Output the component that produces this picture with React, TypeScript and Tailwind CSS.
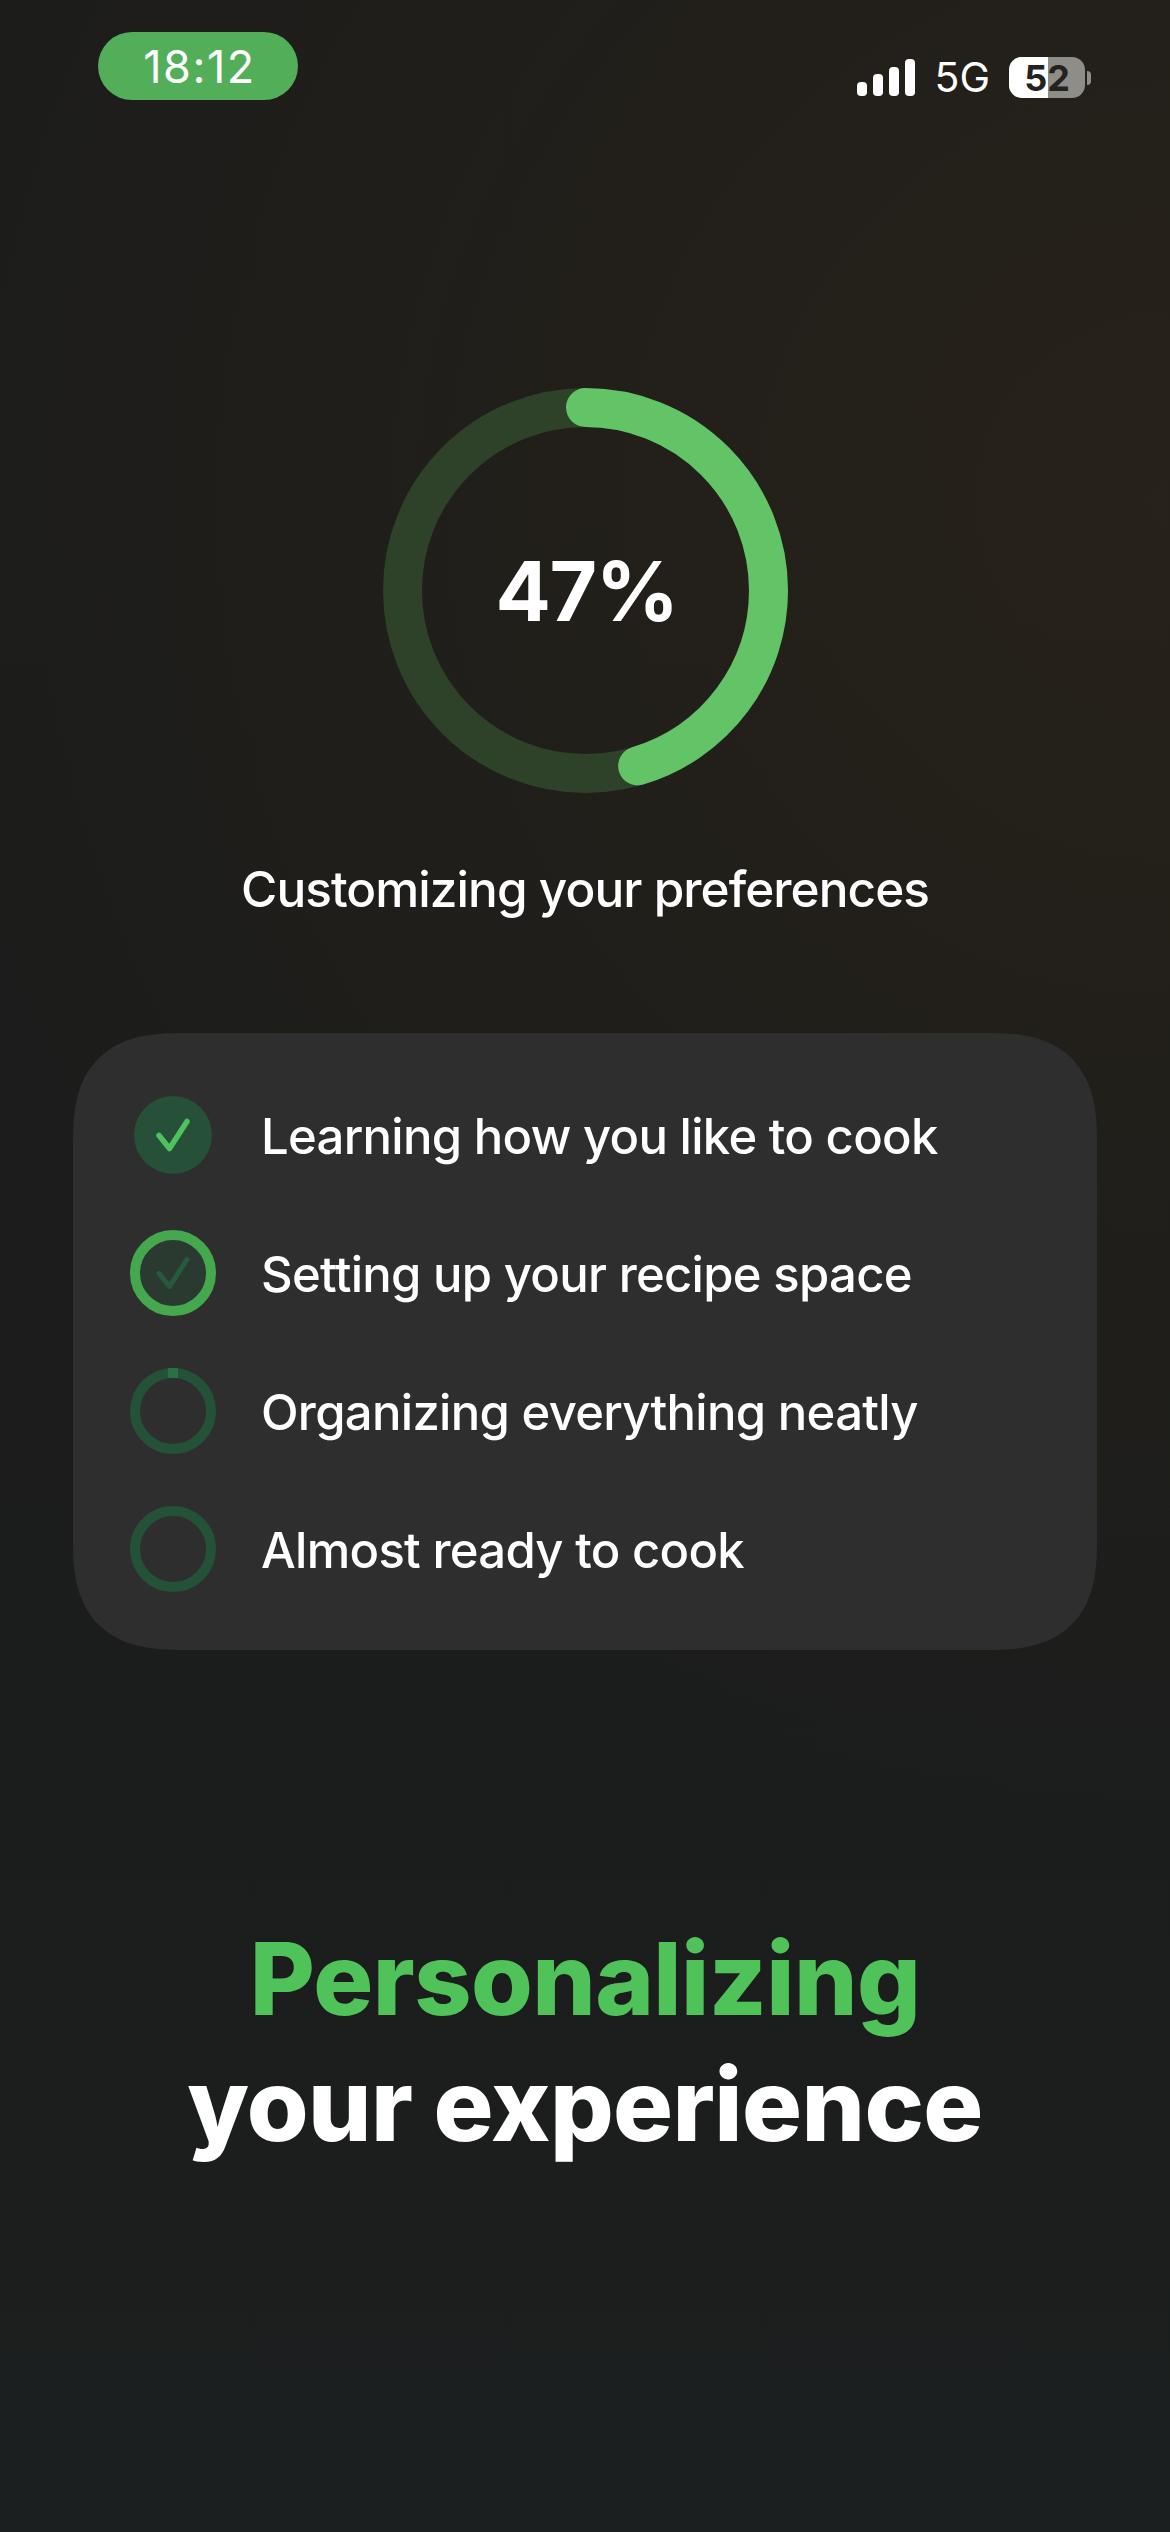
import React from "react";

function Check({ color, width = 5.5 }: { color: string; width?: number }) {
  return (
    <svg width={44} height={44} viewBox="0 0 44 44" fill="none">
      <path d="M8 22.500 L18.500 35.500 L36 8.500" stroke={color} strokeWidth={width} strokeLinecap="round" strokeLinejoin="round" />
    </svg>
  );
}

function Row({ icon, label }: { icon: React.ReactNode; label: string }) {
  return (
    <div className="flex h-[138px] items-center">
      <div className="flex w-[86px] shrink-0 items-center justify-center">{icon}</div>
      <span className="ml-[45px] pt-[4px] text-[49px] font-[450] leading-none tracking-[-0.7px] text-white">{label}</span>
    </div>
  );
}

export default function App() {
  return (
    <div
      className="relative flex h-[2532px] w-[1170px] flex-col overflow-hidden bg-gradient-to-b from-[#1c1c1b] via-[#1b1c1b] to-[#1c1f1f] text-white"
      style={{ fontFamily: "Inter, 'Liberation Sans', sans-serif" }}
    >
      <div className="pointer-events-none absolute inset-0 bg-[radial-gradient(ellipse_1300px_1300px_at_100%_20%,rgba(56,42,24,0.4),transparent)]" />
      <div className="relative flex flex-col">
        <div className="flex h-[100px] items-start justify-between pl-[98px] pr-[79px] pt-[32px]">
          <div className="flex h-[68px] w-[200px] items-center justify-center rounded-full bg-[#53ae5a] pl-[3px] text-[45px] leading-none tracking-[1.5px]">
            18:12
          </div>
          <div className="mt-[25px] flex h-[41px] items-center">
            <svg width="58" height="37" viewBox="0 0 58 37" fill="white">
              <rect x="0" y="23" width="10" height="14" rx="4" />
              <rect x="16" y="15" width="10" height="22" rx="4" />
              <rect x="32" y="8" width="10" height="29" rx="4" />
              <rect x="48" y="0" width="10" height="37" rx="4" />
            </svg>
            <span className="ml-[19px] text-[41px] leading-none">5G</span>
            <div className="relative ml-[19px] flex h-[41px] w-[76px] items-center justify-center overflow-hidden rounded-[13px] bg-[#8f8d88] text-[36px] font-bold leading-none text-[#24221f]">
              <div className="absolute inset-y-0 left-0 w-[39px] bg-white" />
              <span className="relative">52</span>
            </div>
            <div className="ml-[2px] h-[14px] w-[4px] rounded-r-full bg-[#8f8d88]" />
          </div>
        </div>

        <div className="mt-[288px] flex justify-center">
          <div className="relative flex h-[405px] w-[405px] items-center justify-center">
            <svg className="absolute inset-0" width="405" height="405" viewBox="0 0 405 405" fill="none">
              <circle cx="202.500" cy="202.500" r="183" stroke="#2d4229" strokeWidth="39" />
              <circle
                cx="202.500"
                cy="202.500"
                r="183"
                stroke="#62c467"
                strokeWidth="39"
                strokeLinecap="round"
                pathLength="100"
                strokeDasharray="45.400 100"
                transform="rotate(-90 202.500 202.500)"
              />
            </svg>
            <span className="relative pl-[3px] pt-[3px] text-[82px] font-bold leading-none tracking-[-1.5px]">47%</span>
          </div>
        </div>

        <div className="mt-[67px] text-center text-[49.500px] font-[450] leading-[58px] tracking-[-0.95px]">Customizing your preferences</div>

        <div className="mx-[73px] mt-[115px] flex h-[617px] flex-col justify-center rounded-[110px] bg-[#2e2e2e] pl-[57px] [corner-shape:superellipse(1.4)]">
          <Row
            label="Learning how you like to cook"
            icon={
              <div className="flex h-[78px] w-[78px] items-center justify-center rounded-full bg-[#265037]">
                <Check color="#4cc35c" />
              </div>
            }
          />
          <Row
            label="Setting up your recipe space"
            icon={
              <div className="flex h-[86px] w-[86px] items-center justify-center rounded-full border-[10px] border-[#45a84f] bg-[#2a3a30]">
                <Check color="#255a3e" width={5} />
              </div>
            }
          />
          <Row
            label="Organizing everything neatly"
            icon={
              <div className="relative h-[86px] w-[86px] rounded-full border-[10px] border-[#235238]">
                <div className="absolute left-1/2 top-[-10px] h-[10px] w-[10px] -translate-x-1/2 bg-[#2a7046]" />
              </div>
            }
          />
          <Row
            label="Almost ready to cook"
            icon={<div className="h-[86px] w-[86px] rounded-full border-[10px] border-[#235238]" />}
          />
        </div>

        <div className="mt-[266px] text-center text-[100px] font-extrabold leading-[126px] tracking-[-0.6px]">
          <div className="text-[#4fc25a]">Personalizing</div>
          <div className="text-white">your experience</div>
        </div>
      </div>
    </div>
  );
}
